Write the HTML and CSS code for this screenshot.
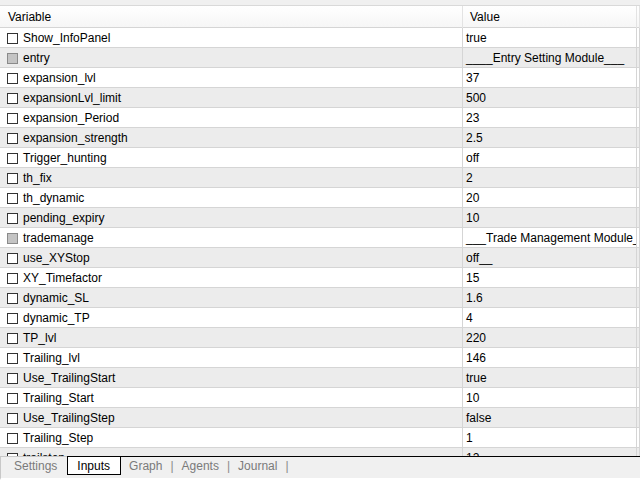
FILE: index.html
```html
<!DOCTYPE html>
<html lang="en">
<head>
<meta charset="UTF-8">
<title>Tester - Inputs</title>
<link rel="stylesheet" href="styles.css">
</head>
<body>
    <div class="tester">
        <div class="top-strip"></div>
        <div class="grid-head">
            <div class="cell name">Variable</div>
            <div class="cell value">Value</div>
            <div class="cell rest"></div>
        </div>

        <div class="grid-body" id="gridBody"></div>

        <div class="tabs">
            <div class="tab">Settings</div>
            <div class="tab active">Inputs</div>
            <div class="tab">Graph</div>
            <div class="sep">|</div>
            <div class="tab">Agents</div>
            <div class="sep">|</div>
            <div class="tab">Journal</div>
            <div class="sep">|</div>
            <div class="fill"></div>
        </div>
    </div>

    <script>
        var inputs = [
            ['Show_InfoPanel', 'true'],
            ['entry', '____Entry Setting Module___', true],
            ['expansion_lvl', '37'],
            ['expansionLvl_limit', '500'],
            ['expansion_Period', '23'],
            ['expansion_strength', '2.5'],
            ['Trigger_hunting', 'off'],
            ['th_fix', '2'],
            ['th_dynamic', '20'],
            ['pending_expiry', '10'],
            ['trademanage', '___Trade Management Module___', true],
            ['use_XYStop', 'off__'],
            ['XY_Timefactor', '15'],
            ['dynamic_SL', '1.6'],
            ['dynamic_TP', '4'],
            ['TP_lvl', '220'],
            ['Trailing_lvl', '146'],
            ['Use_TrailingStart', 'true'],
            ['Trailing_Start', '10'],
            ['Use_TrailingStep', 'false'],
            ['Trailing_Step', '1'],
            ['trailstep', '12']
        ];

        var body = document.getElementById('gridBody');

        inputs.forEach(function(item, i) {
            var row = document.createElement('div');
            row.className = 'row' + (i % 2 ? ' odd' : '');

            var name = document.createElement('div');
            name.className = 'cell name';
            var box = document.createElement('span');
            box.className = 'check' + (item[2] ? ' disabled' : '');
            name.appendChild(box);
            name.appendChild(document.createTextNode(item[0]));

            var value = document.createElement('div');
            value.className = 'cell value';
            value.textContent = item[1];

            var rest = document.createElement('div');
            rest.className = 'cell rest';

            row.appendChild(name);
            row.appendChild(value);
            row.appendChild(rest);
            body.appendChild(row);
        });
    </script>
</body>
</html>
```

FILE: styles.css
```css
body {
    margin: 0;
    font-family: "Liberation Sans", Arial, sans-serif;
    font-size: 12px;
    color: #000;
    background: #f0f0f0;
}

.tester {
    display: flex;
    flex-direction: column;
    width: 640px;
    height: 480px;
    overflow: hidden;
}

.top-strip {
    height: 5px;
    background: #f0f0f0;
    border-bottom: 1px solid #d9d9d9;
}

.grid-head,
.row {
    display: grid;
    grid-template-columns: 463px 174px 1fr;
}

.grid-head {
    height: 21px;
    background: linear-gradient(#ffffff, #f6f6f6);
    border-bottom: 1px solid #d5d5d5;
}

.grid-head .cell {
    line-height: 22px;
    border-right: 1px solid #e3e3e3;
}

.grid-head .name {
    padding-left: 8px;
}

.grid-head .value {
    padding-left: 7px;
}

.grid-body {
    flex: 1;
    overflow: hidden;
    background: #fff;
}

.row {
    height: 19px;
    background: #fff;
    border-bottom: 1px solid #d5d5d5;
}

.row.odd {
    background: #ececec;
}

.row .cell {
    display: flex;
    align-items: center;
    padding-top: 1px;
    white-space: nowrap;
    overflow: hidden;
    border-right: 1px solid #d5d5d5;
}

.row .name {
    padding-left: 7px;
}

.row .value {
    padding-left: 3px;
}

.check {
    width: 9px;
    height: 9px;
    margin-right: 5px;
    border: 1px solid #333;
    background: #fff;
    flex: none;
}

.check.disabled {
    border-color: #8a8a8a;
    background: #c4c4c4;
}

/* bottom tab strip */
.tabs {
    display: flex;
    flex: none;
    height: 24px;
    box-sizing: border-box;
    background: #f0f0f0;
    border-bottom: 2px solid #fff;
    border-left: 1px solid #c8c8c8;
    color: #7a7a7a;
}

.tabs > div {
    line-height: 19px;
    border-top: 1px solid #000;
}

.tab {
    padding: 0 8px;
}

.tab:first-child {
    padding: 0 10px 0 13px;
    border-top-color: #c8c8c8;
}

.tab.active {
    color: #000;
    background: #fff;
    padding: 0 10px 0 9px;
    height: 19px;
    border: 1px solid #000;
    box-sizing: border-box;
    line-height: 18px;
}

.sep {
    color: #8a8a8a;
}

.fill {
    flex: 1;
}
```
